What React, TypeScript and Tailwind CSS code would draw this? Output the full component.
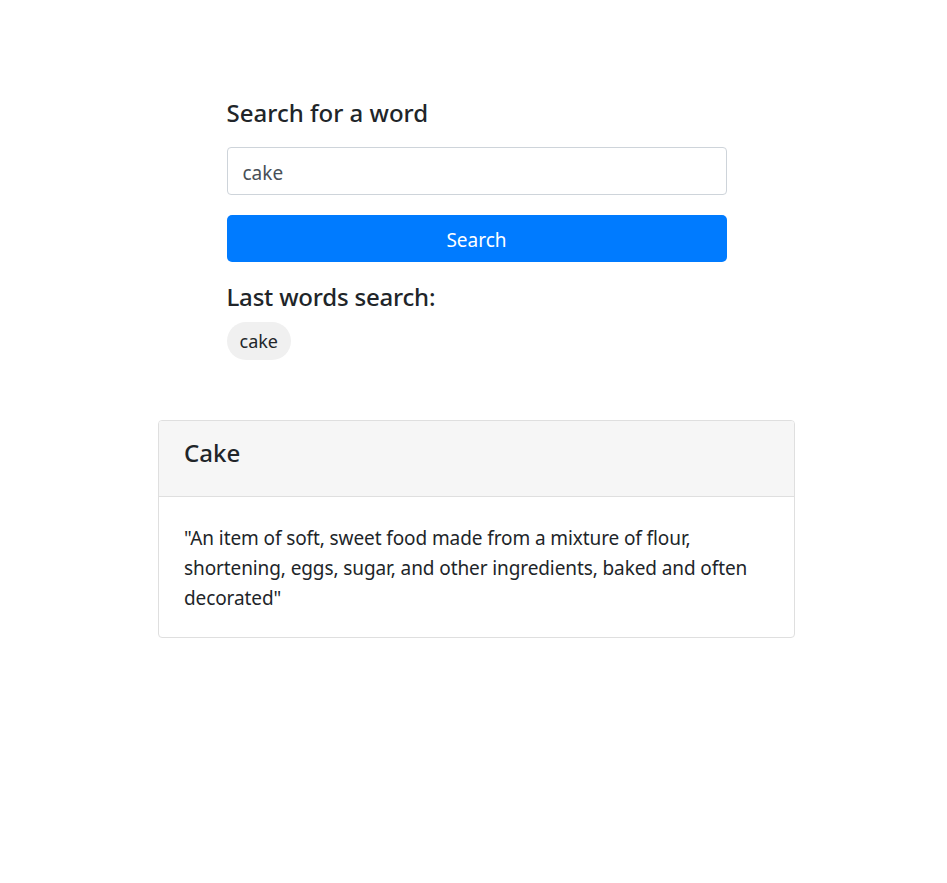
import { useState } from "react";

const FONT = "font-['Segoe_UI','Noto_Sans',sans-serif]";

export default function App() {
  const [word, setWord] = useState("cake");
  const recent = ["cake"];

  return (
    <div className={`min-h-[883px] bg-white pl-[6px] pt-[98px] text-[#212529] ${FONT}`}>
      <div className="mx-auto flex w-[500px] flex-col">
        <h4 className="text-[24px] font-medium leading-[29px]">Search for a word</h4>
        <input
          value={word}
          onChange={(e) => setWord(e.target.value)}
          className="mt-[20px] h-[48px] w-full rounded-[4px] border border-[#ced4da] px-[15px] pt-[3px] text-[19px] text-[#495057] outline-none"
        />
        <button
          type="button"
          className="mt-[20px] h-[47px] w-full rounded-[5px] bg-[#007bff] pt-[3px] text-[19px] text-white"
        >
          Search
        </button>
        <h4 className="mt-[20px] text-[24px] font-medium leading-[29px] tracking-[-0.2px]">
          Last words search:
        </h4>
        <div className="mt-[11px] flex gap-2">
          {recent.map((w) => (
            <span
              key={w}
              className="flex h-[38px] items-center rounded-full bg-[#f0f0f0] px-[13px] pt-[1px] text-[18px]"
            >
              {w}
            </span>
          ))}
        </div>
      </div>

      <div className="mx-auto mt-[60px] w-[637px] overflow-hidden rounded-[4px] border border-[#dfdfdf]">
        <div className="border-b border-[#dfdfdf] bg-[#f6f6f6] px-[25px] pb-[29px] pt-[17px]">
          <h4 className="text-[24px] font-medium leading-[29px]">Cake</h4>
        </div>
        <div className="px-[25px] pb-[24px] pt-[26px]">
          <p className="text-[19px] leading-[30px] tracking-[-0.1px]">
            "An item of soft, sweet food made from a mixture of flour, shortening, eggs, sugar, and
            other ingredients, baked and often decorated"
          </p>
        </div>
      </div>
    </div>
  );
}
